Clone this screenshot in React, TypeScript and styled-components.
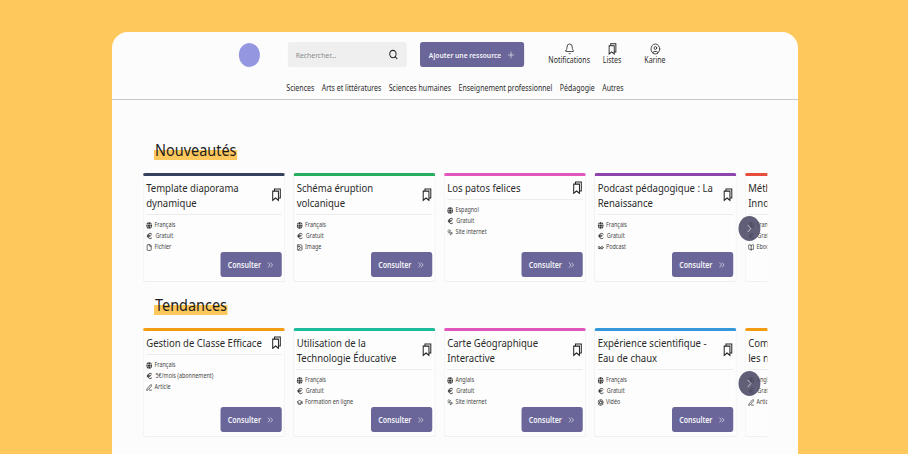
import React from "react";
import styled, { createGlobalStyle } from "styled-components";
import {
  Aperture,
  Bell,
  BookOpen,
  ChevronRight,
  ChevronsRight,
  CircleUser,
  Euro,
  File,
  GraduationCap,
  Image,
  MousePointerClick,
  PenLine,
  Plus,
  Search,
  Voicemail,
} from "lucide-react";
import { FaGlobe } from "react-icons/fa";

const GlobalStyle = createGlobalStyle`
  html, body {
    margin: 0;
    padding: 0;
    height: 454px;
    overflow: hidden;
    background: #ffc85c;
    font-family: "Noto Sans", "Liberation Sans", sans-serif;
  }
`;

const ListIcon = () => (
  <svg width="12" height="13.5" viewBox="0 0 12 14" fill="none" stroke="#222" strokeWidth="1.2">
    <path d="M1.5 3.2h6.8v9.6L4.9 10.4l-3.4 2.4z" />
    <path d="M3.6 3V1h6.9v9.4H8.4" />
  </svg>
);

type Meta = { icon: React.ReactNode; label: string };
type Resource = { title: string; accent: string; meta: Meta[] };

const globe = <FaGlobe size={7} />;
const euro = <Euro size={8} strokeWidth={2.8} />;

const nouveautes: Resource[] = [
  {
    title: "Template diaporama dynamique",
    accent: "#34405e",
    meta: [
      { icon: globe, label: "Français" },
      { icon: euro, label: "Gratuit" },
      { icon: <File size={7} strokeWidth={2.6} />, label: "Fichier" },
    ],
  },
  {
    title: "Schéma éruption volcanique",
    accent: "#27ae60",
    meta: [
      { icon: globe, label: "Français" },
      { icon: euro, label: "Gratuit" },
      { icon: <Image size={7} strokeWidth={2.6} />, label: "Image" },
    ],
  },
  {
    title: "Los patos felices",
    accent: "#e056bd",
    meta: [
      { icon: globe, label: "Espagnol" },
      { icon: euro, label: "Gratuit" },
      { icon: <MousePointerClick size={7} strokeWidth={2.4} />, label: "Site internet" },
    ],
  },
  {
    title: "Podcast pédagogique : La Renaissance",
    accent: "#8e44ad",
    meta: [
      { icon: globe, label: "Français" },
      { icon: euro, label: "Gratuit" },
      { icon: <Voicemail size={7} strokeWidth={2.4} />, label: "Podcast" },
    ],
  },
  {
    title: "Méthodes Pédagogiques Innovantes",
    accent: "#e74c3c",
    meta: [
      { icon: globe, label: "Français" },
      { icon: euro, label: "Gratuit" },
      { icon: <BookOpen size={7} strokeWidth={2.6} />, label: "Ebook" },
    ],
  },
];

const tendances: Resource[] = [
  {
    title: "Gestion de Classe Efficace",
    accent: "#f39c12",
    meta: [
      { icon: globe, label: "Français" },
      { icon: euro, label: "5€/mois (abonnement)" },
      { icon: <PenLine size={7} strokeWidth={2.6} />, label: "Article" },
    ],
  },
  {
    title: "Utilisation de la Technologie Éducative",
    accent: "#1abc9c",
    meta: [
      { icon: globe, label: "Français" },
      { icon: euro, label: "Gratuit" },
      { icon: <GraduationCap size={7} strokeWidth={2.6} />, label: "Formation en ligne" },
    ],
  },
  {
    title: "Carte Géographique Interactive",
    accent: "#e056bd",
    meta: [
      { icon: globe, label: "Anglais" },
      { icon: euro, label: "Gratuit" },
      { icon: <MousePointerClick size={7} strokeWidth={2.4} />, label: "Site internet" },
    ],
  },
  {
    title: "Expérience scientifique - Eau de chaux",
    accent: "#3498db",
    meta: [
      { icon: globe, label: "Français" },
      { icon: euro, label: "Gratuit" },
      { icon: <Aperture size={7} strokeWidth={2.2} />, label: "Vidéo" },
    ],
  },
  {
    title: "Comprendre aujourd'hui les nouveaux médias",
    accent: "#f39c12",
    meta: [
      { icon: globe, label: "Anglais" },
      { icon: euro, label: "Gratuit" },
      { icon: <PenLine size={7} strokeWidth={2.6} />, label: "Article" },
    ],
  },
];

const categories = [
  "Sciences",
  "Arts et littératures",
  "Sciences humaines",
  "Enseignement professionnel",
  "Pédagogie",
  "Autres",
];

const ResourceCard = ({ item }: { item: Resource }) => (
  <Card $accent={item.accent}>
    <CardHead>
      <CardTitle>{item.title}</CardTitle>
      <ListIcon />
    </CardHead>
    <MetaList>
      {item.meta.map((m) => (
        <MetaRow key={m.label}>
          {m.icon}
          <span>{m.label}</span>
        </MetaRow>
      ))}
    </MetaList>
    <CardFoot>
      <ConsultButton>
        Consulter <ChevronsRight size={10} strokeWidth={1.6} />
      </ConsultButton>
    </CardFoot>
  </Card>
);

const Section = ({ title, items }: { title: string; items: Resource[] }) => (
  <SectionWrap>
    <Heading>{title}</Heading>
    {items.length > 0 && (
      <Carousel>
        <Track>
          {items.map((item) => (
            <ResourceCard key={item.title} item={item} />
          ))}
        </Track>
        <NextButton>
          <ChevronRight size={13} strokeWidth={1.5} />
        </NextButton>
      </Carousel>
    )}
  </SectionWrap>
);

export default function App() {
  return (
    <>
      <GlobalStyle />
      <Stage>
        <Panel>
          <Header>
            <TopRow>
              <Logo />
              <SearchBox>
                <span>Rechercher...</span>
                <Search size={11} strokeWidth={2.4} color="#222" />
              </SearchBox>
              <AddButton>
                Ajouter une ressource <Plus size={10} strokeWidth={1.6} />
              </AddButton>
              <Actions>
                <Action>
                  <Bell size={12} strokeWidth={1.8} />
                  Notifications
                </Action>
                <Action>
                  <ListIcon />
                  Listes
                </Action>
                <Action>
                  <CircleUser size={12} strokeWidth={1.8} />
                  Karine
                </Action>
              </Actions>
            </TopRow>
            <Nav>
              {categories.map((c) => (
                <NavItem key={c}>{c}</NavItem>
              ))}
            </Nav>
          </Header>
          <Main>
            <Section title="Nouveautés" items={nouveautes} />
            <Section title="Tendances" items={tendances} />
            <Section title="Sélection" items={[]} />
          </Main>
        </Panel>
      </Stage>
    </>
  );
}

/* the whole capture is squeezed horizontally, circles come out as ellipses */
const Stage = styled.div`
  width: 1038px;
  transform: scaleX(0.875);
  transform-origin: 0 0;
`;

const Panel = styled.div`
  margin-left: 128px;
  width: 784px;
  height: 422px;
  margin-top: 32px;
  display: inline-block;
  vertical-align: top;
  background: #fcfcfc;
  border-radius: 18px 18px 0 0 / 16px 16px 0 0;
  overflow: hidden;
`;

const Header = styled.header`
  height: 68px;
  box-sizing: border-box;
  padding-top: 10px;
  border-bottom: 1px solid #c9c9c9;
`;

const TopRow = styled.div`
  display: flex;
  align-items: center;
  height: 25px;
  padding-left: 145px;
`;

const Logo = styled.div`
  width: 24px;
  height: 24px;
  border-radius: 50%;
  background: #9497e0;
  margin-right: 32px;
`;

const SearchBox = styled.div`
  width: 136px;
  height: 25px;
  box-sizing: border-box;
  padding: 0 10px 0 9px;
  display: flex;
  align-items: center;
  justify-content: space-between;
  background: #efefef;
  border-radius: 3px;
  font-size: 7.8px;
  color: #8b8b8b;
  margin-right: 15px;
`;

const AddButton = styled.button`
  width: 119px;
  height: 25px;
  padding: 0;
  display: flex;
  align-items: center;
  justify-content: center;
  gap: 6px;
  background: #6a6699;
  color: #f4f4f8;
  border: none;
  border-radius: 3px;
  font-family: inherit;
  font-size: 7.7px;
  font-weight: 600;
  margin-right: 27px;
`;

const Actions = styled.div`
  display: flex;
`;

const Action = styled.div`
  width: 49px;
  height: 25px;
  box-sizing: border-box;
  padding-top: 1px;
  display: flex;
  flex-direction: column;
  align-items: center;
  font-size: 8px;
  line-height: 10px;
  color: #2c2c2c;
  white-space: nowrap;
  svg {
    height: 12px;
    flex: none;
  }
`;

const Nav = styled.nav`
  display: flex;
  justify-content: center;
  gap: 8.5px;
  margin-top: 16px;
`;

const NavItem = styled.span`
  font-size: 8px;
  line-height: 10px;
  color: #2c2c2c;
  white-space: nowrap;
`;

const Main = styled.main`
  padding: 40px 34.8px 0 34.7px;
`;

const SectionWrap = styled.section`
  margin-bottom: 13px;
`;

const Heading = styled.h2`
  width: fit-content;
  margin: 0 0 13px 13.5px;
  padding: 0 1px;
  font-size: 16.5px;
  font-weight: 400;
  line-height: 20px;
  color: #1c1c1c;
  background: linear-gradient(transparent 50%, #ffc85c 50%);
`;

const Carousel = styled.div`
  position: relative;
`;

const Track = styled.div`
  display: flex;
  gap: 8.6px;
  overflow: hidden;
`;

const Card = styled.article<{ $accent: string }>`
  flex: none;
  width: 163.4px;
  height: 109px;
  box-sizing: border-box;
  padding: 0 2.8px 4px 3.4px;
  display: flex;
  flex-direction: column;
  background: #fdfdfd;
  border: 1px solid #efefef;
  border-top: 3px solid ${(p) => p.$accent};
  border-radius: 3px;
`;

const CardHead = styled.div`
  display: flex;
  align-items: center;
  justify-content: space-between;
  gap: 6px;
  padding: 4px 0;
  border-bottom: 1px solid #ececec;
  svg {
    flex: none;
  }
`;

const CardTitle = styled.div`
  font-size: 10.9px;
  line-height: 15px;
  color: #2a2a2a;
`;

const MetaList = styled.div`
  display: flex;
  flex-direction: column;
  gap: 3px;
  margin-top: 6px;
`;

const MetaRow = styled.div`
  display: flex;
  align-items: center;
  gap: 2.5px;
  height: 8px;
  font-size: 6.2px;
  line-height: 8px;
  color: #444;
  white-space: nowrap;
  svg {
    flex: none;
    color: #333;
  }
`;

const CardFoot = styled.div`
  margin-top: auto;
  display: flex;
  justify-content: flex-end;
`;

const ConsultButton = styled.button`
  width: 70px;
  height: 25px;
  padding: 0;
  display: flex;
  align-items: center;
  justify-content: center;
  gap: 6px;
  background: #6a6699;
  color: #f4f4f8;
  border: none;
  border-radius: 3px;
  font-family: inherit;
  font-size: 8px;
  font-weight: 600;
`;

const NextButton = styled.button`
  position: absolute;
  top: 43px;
  right: 8px;
  width: 25px;
  height: 25px;
  padding: 0;
  display: flex;
  align-items: center;
  justify-content: center;
  background: rgba(80, 78, 105, 0.9);
  color: #eee;
  border: none;
  border-radius: 50%;
`;
